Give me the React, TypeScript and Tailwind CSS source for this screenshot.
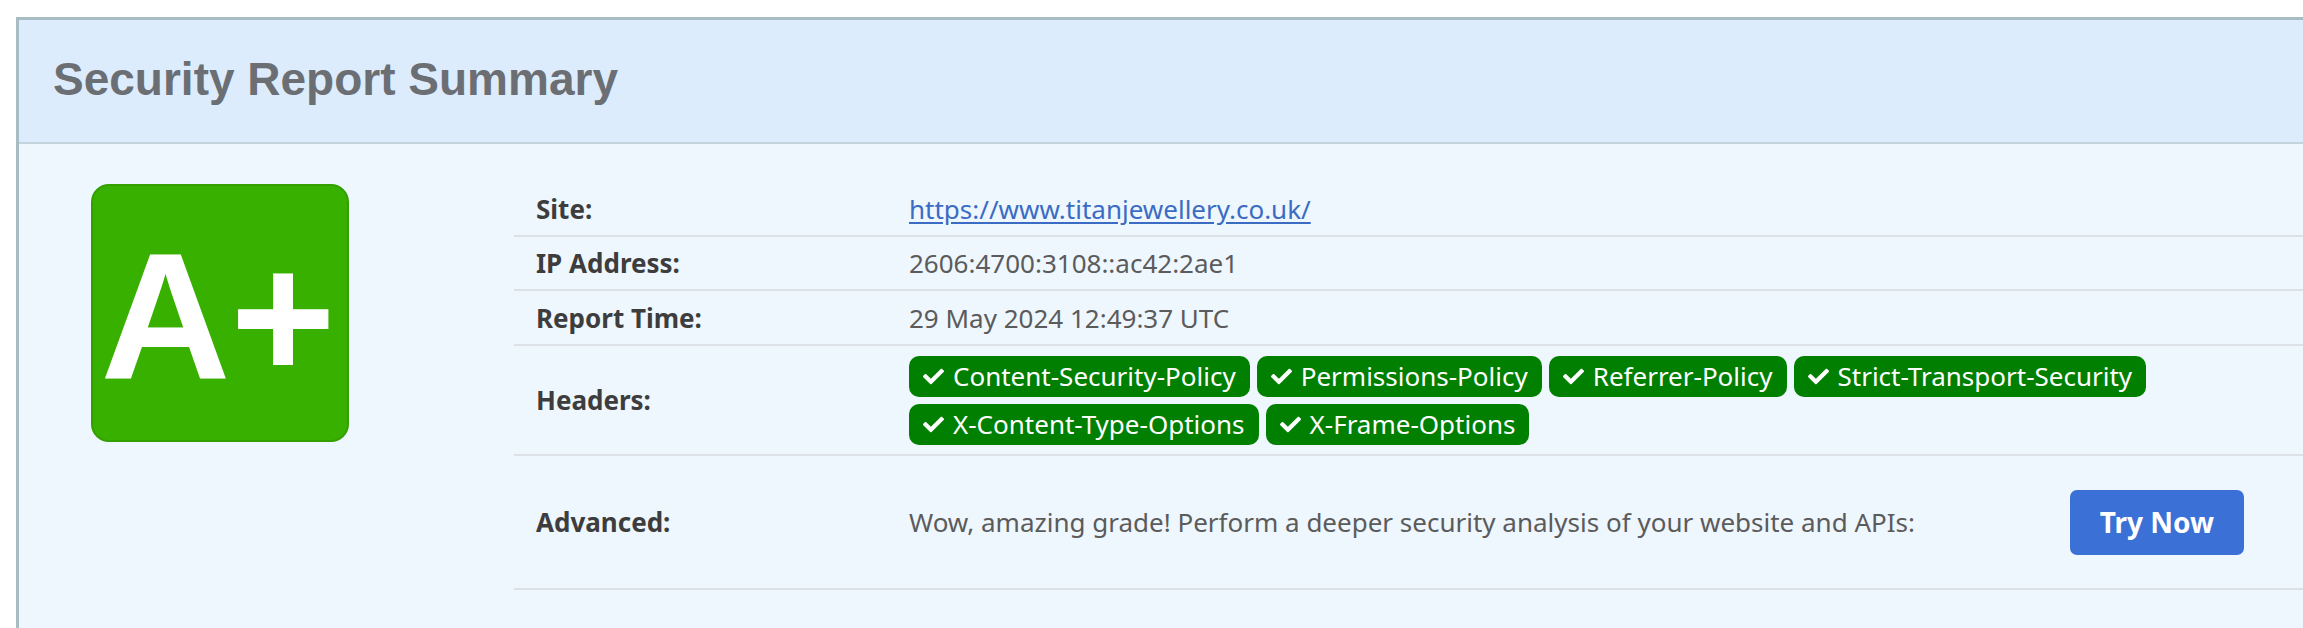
import React from "react";
import { FaCheck } from "react-icons/fa";

const headers = [
  "Content-Security-Policy",
  "Permissions-Policy",
  "Referrer-Policy",
  "Strict-Transport-Security",
  "X-Content-Type-Options",
  "X-Frame-Options",
];

const Badge = ({ name }: { name: string }) => (
  <span className="inline-flex items-center gap-[9px] h-[41px] px-[14px] rounded-[10px] bg-[#007f00] text-white">
    <FaCheck className="w-[21px] h-[21px]" />
    <span>{name}</span>
  </span>
);

const Row = ({
  label,
  children,
  className = "",
}: {
  label: string;
  children: React.ReactNode;
  className?: string;
}) => (
  <div className={`flex items-center border-b-2 border-[#dbe1e6] ${className}`}>
    <div className="w-[374px] shrink-0 pl-[22px] font-bold text-[#3d3d3d]">{label}</div>
    <div className="flex-1 pl-[21px] text-[#5b5b5b]">{children}</div>
  </div>
);

export default function App() {
  return (
    <div className="w-full h-[628px] overflow-hidden bg-white pt-[17px] pl-[16px]">
      <div className="h-[700px] border-l-[3px] border-t-[3px] border-[#a8bcc3] bg-[#eef6fe]">
        {/* header */}
        <div className="h-[124px] flex items-center pl-[34px] pb-[3px] bg-[#dcecfc] border-b-2 border-[#c5d3dd]">
          <h1 className="text-[46px] font-bold text-[#6b6e73] font-['Liberation_Sans',Arial,sans-serif]">
            Security Report Summary
          </h1>
        </div>

        {/* body */}
        <div className="flex font-['Noto_Sans',sans-serif] text-[26px] leading-[38px]">
          <div className="w-[495px] shrink-0 pl-[72px] pt-[40px]">
            <div className="w-[258px] h-[258px] flex items-center justify-center rounded-[18px] bg-[#38b000] border-2 border-[#33a000]">
              <span className="text-white font-bold text-[180px] leading-none font-['Liberation_Sans',Arial,sans-serif] pt-[8px] pr-[4px]">
                A+
              </span>
            </div>
          </div>

          <div className="flex-1 pt-[39px]">
            <Row label="Site:" className="h-[54px]">
              <a href="#" className="text-[#3a6cc4] underline underline-offset-[3px]">
                https://www.titanjewellery.co.uk/
              </a>
            </Row>
            <Row label="IP Address:" className="h-[54px]">
              2606:4700:3108::ac42:2ae1
            </Row>
            <Row label="Report Time:" className="h-[55px]">
              29 May 2024 12:49:37 UTC
            </Row>
            <Row label="Headers:" className="h-[110px]">
              <div className="flex flex-wrap gap-[7px] pr-[100px]">
                {headers.map((h) => (
                  <Badge key={h} name={h} />
                ))}
              </div>
            </Row>
            <Row label="Advanced:" className="h-[134px]">
              <div className="flex items-center justify-between pr-[59px]">
                <span>Wow, amazing grade! Perform a deeper security analysis of your website and APIs:</span>
                <button className="h-[65px] px-[30px] rounded-[7px] bg-[#3b70d7] text-white font-bold text-[28px]">
                  Try Now
                </button>
              </div>
            </Row>
          </div>
        </div>
      </div>
    </div>
  );
}
